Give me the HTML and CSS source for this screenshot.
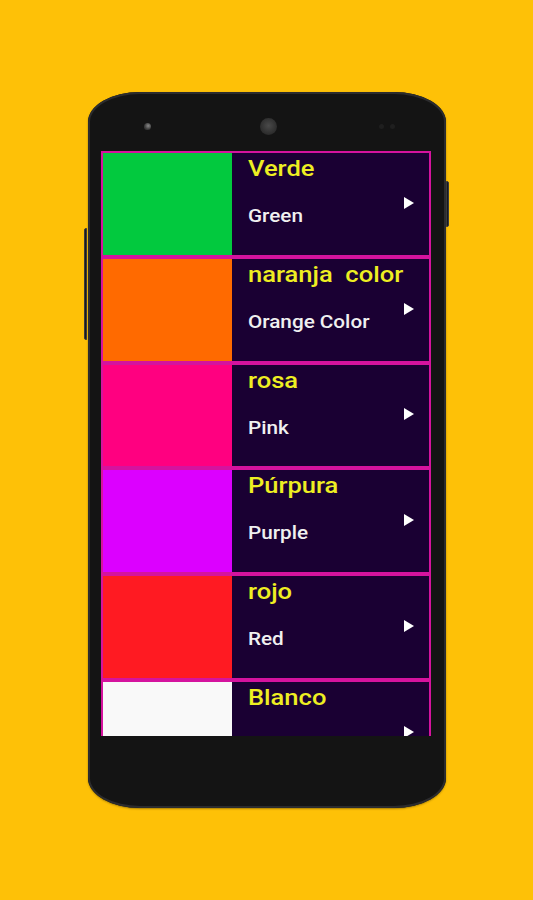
FILE: index.html
```html
<!DOCTYPE html>
<html lang="es">
<head>
<meta charset="utf-8">
<title>Colores</title>
<link rel="stylesheet" href="styles.css">
</head>
<body>
<div class="phone">
  <span class="btn btn-right"></span>
  <span class="btn btn-left"></span>
  <div class="bezel-top">
    <span class="sensor"></span>
    <span class="camera"></span>
    <span class="dots"><i></i><i></i></span>
  </div>
  <div class="screen">
    <div class="item">
      <div class="swatch green"></div>
      <div class="panel">
        <div class="texts"><div class="title">Verde</div><div class="sub">Green</div></div>
        <span class="arrow"></span>
      </div>
    </div>
    <div class="item">
      <div class="swatch orange"></div>
      <div class="panel">
        <div class="texts"><div class="title">naranja&nbsp; color</div><div class="sub">Orange Color</div></div>
        <span class="arrow"></span>
      </div>
    </div>
    <div class="item">
      <div class="swatch pink"></div>
      <div class="panel">
        <div class="texts"><div class="title">rosa</div><div class="sub">Pink</div></div>
        <span class="arrow"></span>
      </div>
    </div>
    <div class="item">
      <div class="swatch purple"></div>
      <div class="panel">
        <div class="texts"><div class="title">Púrpura</div><div class="sub">Purple</div></div>
        <span class="arrow"></span>
      </div>
    </div>
    <div class="item">
      <div class="swatch red"></div>
      <div class="panel">
        <div class="texts"><div class="title">rojo</div><div class="sub">Red</div></div>
        <span class="arrow"></span>
      </div>
    </div>
    <div class="item">
      <div class="swatch white"></div>
      <div class="panel">
        <div class="texts"><div class="title">Blanco</div></div>
        <span class="arrow"></span>
      </div>
    </div>
  </div>
</div>
</body>
</html>
```
FILE: styles.css
```css
html, body {
  margin: 0;
  padding: 0;
}
body {
  background: #fec107;
  width: 533px;
  height: 900px;
  overflow: hidden;
  font-family: Roboto, "Liberation Sans", sans-serif;
}
.phone {
  position: relative;
  margin: 92px 0 0 88px;
  width: 358px;
  height: 716px;
  background: #141414;
  border-radius: 52px 52px 52px 52px / 30px 30px 30px 30px;
  box-shadow: inset 0 0 0 2px #2c2c2e, 0 1px 2px rgba(0,0,0,0.35);
  box-sizing: border-box;
}
.btn {
  position: absolute;
  width: 3px;
  background: #1a1a1a;
  border: 1px solid #3a3a3e;
  box-sizing: border-box;
}
.btn-right {
  right: -3px;
  top: 89px;
  height: 46px;
  border-radius: 0 2px 2px 0;
}
.btn-left {
  left: -4px;
  top: 136px;
  height: 112px;
  border-radius: 2px 0 0 2px;
}
.bezel-top {
  height: 59px;
  display: flex;
  align-items: center;
  padding: 9px 0 0 56px;
  box-sizing: border-box;
}
.sensor {
  width: 7px;
  height: 7px;
  border-radius: 50%;
  background: radial-gradient(circle at 60% 40%, #8a8a8a, #3a3a3a 60%);
}
.camera {
  margin-left: 109px;
  width: 17px;
  height: 17px;
  border-radius: 50%;
  background: radial-gradient(circle at 50% 45%, #4a4a4a, #2c2c2c 70%);
}
.dots {
  margin-left: 102px;
  display: flex;
  gap: 6px;
}
.dots i {
  width: 5px;
  height: 5px;
  border-radius: 50%;
  background: #1f1f1f;
}
.screen {
  margin-left: 13px;
  width: 330px;
  height: 585px;
  overflow: hidden;
  background: #1a0033;
}
.item {
  display: flex;
  height: 105.8px;
  border: 2px solid #d5139e;
  box-sizing: border-box;
}
.swatch {
  width: 129px;
  flex: none;
}
.green { background: #02c93e; }
.orange { background: #ff6a00; }
.pink { background: #ff0080; }
.purple { background: #dc00ff; }
.red { background: #ff1a22; }
.white { background: #f9f9f9; }
.panel {
  flex: 1;
  background: #1a0033;
  display: flex;
  align-items: center;
  justify-content: space-between;
  padding: 0 15px 0 16px;
}
.texts {
  align-self: flex-start;
  padding-top: 2px;
}
.title {
  color: #eeee22;
  font-size: 22px;
  font-weight: 500;
  line-height: 27px;
  transform: scaleX(1.16);
  transform-origin: left center;
  white-space: nowrap;
}
.sub {
  color: #f0f0f0;
  font-size: 18px;
  font-weight: 500;
  line-height: 20px;
  margin-top: 24px;
  transform: scaleX(1.15);
  transform-origin: left center;
  white-space: nowrap;
}
.arrow {
  width: 0;
  height: 0;
  border-top: 6px solid transparent;
  border-bottom: 6px solid transparent;
  border-left: 10px solid #ffffff;
  margin-top: -2px;
}
```
